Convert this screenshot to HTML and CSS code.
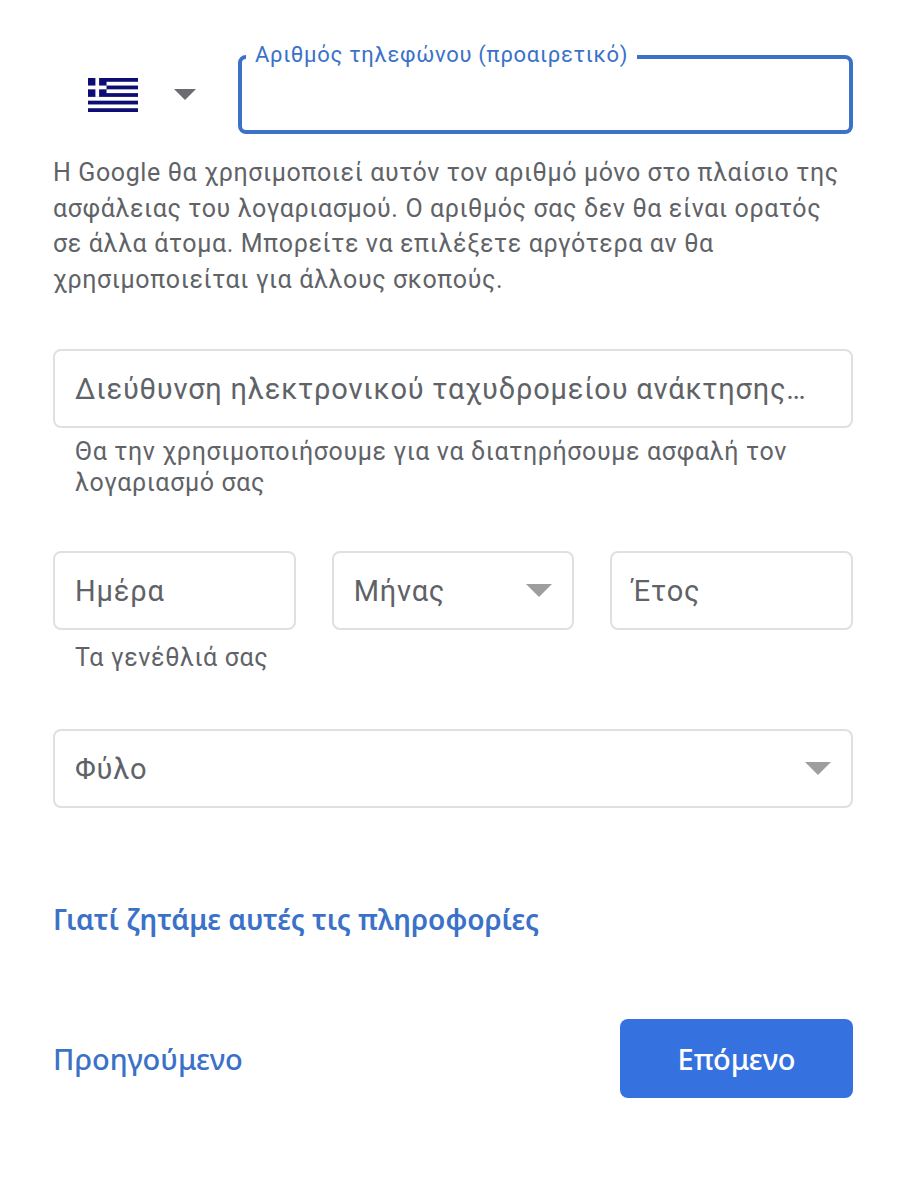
FILE: index.html
```html
<!DOCTYPE html>
<html lang="el">
<head>
    <meta charset="UTF-8">
    <meta name="viewport" content="width=device-width, initial-scale=1.0">
    <title>Google</title>
    <link rel="stylesheet" href="styles.css">
</head>
<body>
    <form class="form">
        <div class="phone-row">
            <div class="country">
                <svg class="flag" width="50" height="34" viewBox="0 0 27 18" preserveAspectRatio="none">
                    <rect width="27" height="18" fill="#0d0d75"/>
                    <g fill="#fff">
                        <rect x="10" y="2" width="17" height="2"/>
                        <rect x="10" y="6" width="17" height="2"/>
                        <rect y="10" width="27" height="2"/>
                        <rect y="14" width="27" height="2"/>
                        <rect x="4" width="2" height="10"/>
                        <rect y="4" width="10" height="2"/>
                    </g>
                </svg>
                <span class="caret caret-dark"></span>
            </div>
            <div class="field field-focus">
                <span class="field-label">Αριθμός τηλεφώνου (προαιρετικό)</span>
            </div>
        </div>
        <p class="note">Η Google θα χρησιμοποιεί αυτόν τον αριθμό μόνο στο πλαίσιο της ασφάλειας του λογαριασμού. Ο αριθμός σας δεν θα είναι ορατός σε άλλα άτομα. Μπορείτε να επιλέξετε αργότερα αν θα χρησιμοποιείται για άλλους σκοπούς.</p>

        <div class="field recovery">
            <span class="placeholder">Διεύθυνση ηλεκτρονικού ταχυδρομείου ανάκτησης…</span>
        </div>
        <p class="hint">Θα την χρησιμοποιήσουμε για να διατηρήσουμε ασφαλή τον λογαριασμό σας</p>

        <div class="date-row">
            <div class="field"><span class="placeholder">Ημέρα</span></div>
            <div class="field"><span class="placeholder">Μήνας</span><span class="caret"></span></div>
            <div class="field"><span class="placeholder">Έτος</span></div>
        </div>
        <p class="hint hint-date">Τα γενέθλιά σας</p>

        <div class="field gender">
            <span class="placeholder">Φύλο</span><span class="caret"></span>
        </div>

        <a class="why-link" href="#">Γιατί ζητάμε αυτές τις πληροφορίες</a>

        <div class="actions">
            <a class="back-link" href="#">Προηγούμενο</a>
            <button class="btn-next" type="button">Επόμενο</button>
        </div>
    </form>
</body>
</html>
```

FILE: styles.css
```css
body {
    font-family: Roboto, Arial, sans-serif;
    margin: 0;
    padding: 0;
    background-color: #fff;
    color: #5f6368;
}

.form {
    box-sizing: border-box;
    width: 904px;
    height: 1200px;
    padding: 55px 51px 0 53px;
}

.phone-row {
    display: flex;
    height: 79px;
}

.country {
    width: 185px;
    display: flex;
    align-items: center;
    padding-left: 35px;
    box-sizing: border-box;
}

.flag {
    display: block;
    margin-right: 36px;
}

.caret {
    width: 0;
    height: 0;
    border-left: 13px solid transparent;
    border-right: 13px solid transparent;
    border-top: 13px solid #9e9e9e;
}

.caret-dark {
    border-left-width: 11px;
    border-right-width: 11px;
    border-top-width: 11px;
    border-top-color: #6b6b70;
}

.field {
    box-sizing: border-box;
    height: 79px;
    border: 2px solid #e0e0e0;
    border-radius: 8px;
    padding: 0 20px;
    display: flex;
    align-items: center;
    justify-content: space-between;
    font-size: 29px;
}

.field-focus {
    position: relative;
    flex: 1;
    border: 4px solid #3b72c8;
}

.field-label {
    position: absolute;
    left: 4px;
    top: -17px;
    padding: 0 9px;
    background-color: #fff;
    color: #3b72c8;
    font-size: 22px;
    line-height: 26px;
    letter-spacing: 0.7px;
}

.note {
    margin: 21px 0 0;
    font-size: 25px;
    line-height: 35.5px;
    letter-spacing: 0.62px;
}

.recovery {
    margin-top: 52px;
}

.placeholder {
    white-space: nowrap;
    letter-spacing: 0.8px;
}

.hint {
    margin: 8px 0 0;
    padding-left: 22px;
    font-size: 25px;
    line-height: 31px;
    letter-spacing: 0.64px;
}

.hint-date {
    margin-top: 12px;
}

.date-row {
    display: grid;
    grid-template-columns: repeat(3, 1fr);
    gap: 36px;
    margin-top: 53px;
}

.gender {
    margin-top: 56px;
}

.why-link {
    display: block;
    margin-top: 91px;
    color: #3b72c8;
    font-family: "Noto Sans", Arial, sans-serif;
    font-size: 28px;
    font-weight: 600;
    line-height: 40px;
    text-decoration: none;
}

.actions {
    display: flex;
    justify-content: space-between;
    align-items: center;
    margin-top: 80px;
}

.back-link {
    color: #3b72c8;
    font-family: "Noto Sans", Arial, sans-serif;
    font-size: 29px;
    font-weight: 500;
    text-decoration: none;
}

.btn-next {
    width: 233px;
    height: 79px;
    border: none;
    border-radius: 8px;
    background-color: #3671e0;
    color: #fff;
    font-family: "Noto Sans", Arial, sans-serif;
    font-size: 29px;
    font-weight: 500;
}
```
